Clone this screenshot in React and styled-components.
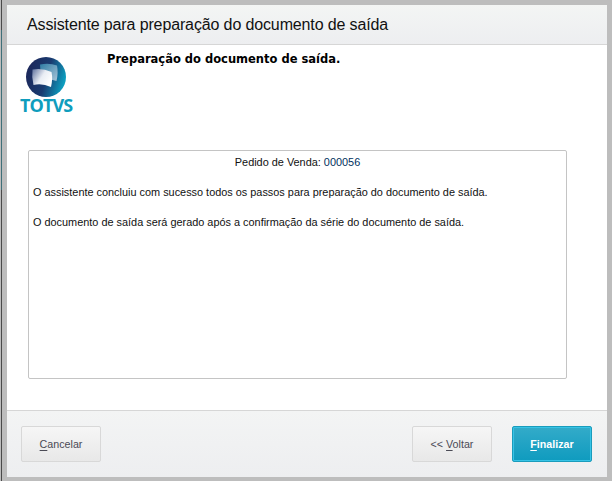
import React from "react";
import styled, { createGlobalStyle } from "styled-components";

const Global = createGlobalStyle`
  html, body { margin: 0; padding: 0; background: #bdbdbd; }
  body { font-family: "Liberation Sans", Arial, sans-serif; }
`;
const Backdrop = styled.div`
  width: 612px; height: 481px; box-sizing: border-box; overflow: hidden;
  padding: 5px 5px 4px 7px;
  background:
    linear-gradient(#4a4a4a 30px, #3f6f78 30px, #3f6f78 190px, #4a4a4a 190px) 1px 0 / 1px 100% no-repeat,
    #bdbdbd;
`;
const Dialog = styled.div`
  height: 100%; display: flex; flex-direction: column; background: #fff;
`;
const Header = styled.header`
  height: 39px; flex: none; box-sizing: content-box;
  background: linear-gradient(#f3f5f4, #edeef0);
  border-bottom: 1px solid #d6d6d6;
  display: flex; align-items: center; padding-left: 20px;
`;
const Title = styled.h1`
  margin: 0; font-weight: 400; font-size: 16px; letter-spacing: -0.13px; color: #111; white-space: nowrap;
`;
const Body = styled.main`
  flex: 1; display: flex; flex-direction: column; padding: 0 40px 31px 21px; min-height: 0;
`;
const Intro = styled.div`
  height: 105px; flex: none; display: flex;
`;
const Brand = styled.div`
  width: 79px; flex: none; display: flex; flex-direction: column; align-items: flex-start;
  padding: 12px 0 0 0;
`;
const Logo = styled.svg`
  width: 40px; height: 40px; margin-left: -2px; display: block;
`;
const BrandName = styled.span`
  font: 700 18px/16px "Open Sans", "Liberation Sans", sans-serif;
  color: #0f9dbd; letter-spacing: -0.9px; margin: 0 0 0 -8px;
`;
const Heading = styled.h2`
  margin: 7px 0 0; font: 700 11.5px/14px "DejaVu Sans", Verdana, sans-serif; color: #000;
`;
const Panel = styled.section`
  flex: 1; box-sizing: border-box; width: 539px;
  border: 1px solid #c4c4c4; border-radius: 2px;
  padding: 5px 4px 4px; font-size: 10.9px; line-height: 13px; color: #111;
  display: flex; flex-direction: column; gap: 17px;
`;
const Centered = styled.div`
  text-align: center;
`;
const Value = styled.span`
  color: #00305e;
`;
const Para = styled.p`
  margin: 0; white-space: nowrap;
`;
const Footer = styled.footer`
  height: 66px; flex: none; display: flex; align-items: center;
  padding: 0 15px 0 14px; gap: 20px;
  background: linear-gradient(#f3f4f4, #edeef0);
  border-top: 1px solid #d6d6d6;
`;
const Button = styled.button`
  width: 80px; height: 36px; box-sizing: border-box; border-radius: 2px; padding: 0;
  font: 400 10.7px "Liberation Sans", Arial, sans-serif;
  border: 1px solid ${p => (p.$primary ? "#1a9cbc" : "#d8d8d8")};
  background: ${p => (p.$primary ? "linear-gradient(#33abc9, #0f9bbf)" : "linear-gradient(#f6f6f6, #e8e8e8)")};
  color: ${p => (p.$primary ? "#fff" : "#4a4a55")};
  font-weight: ${p => (p.$primary ? 700 : 400)};
  box-shadow: ${p => (p.$primary ? "inset 0 0 0 1px #37c3e6" : "none")};
  u { text-underline-offset: 2px; }
`;
const Spacer = styled.div`
  flex: 1;
`;

export default function App() {
  return (
    <>
      <Global />
      <Backdrop>
        <Dialog>
          <Header>
            <Title>Assistente para preparação do documento de saída</Title>
          </Header>
          <Body>
            <Intro>
              <Brand>
                <Logo viewBox="0 0 40 40">
                  <defs>
                    <linearGradient id="rim" x1="0" y1="0.2" x2="1" y2="0.5">
                      <stop offset="0" stopColor="#1c2558" />
                      <stop offset="0.55" stopColor="#1a3b70" />
                      <stop offset="1" stopColor="#0c9fc0" />
                    </linearGradient>
                    <linearGradient id="back" x1="0" y1="0" x2="1" y2="1">
                      <stop offset="0" stopColor="#2f7ca4" />
                      <stop offset="1" stopColor="#a8c4d8" />
                    </linearGradient>
                    <linearGradient id="front" x1="0" y1="0" x2="1" y2="0.6">
                      <stop offset="0" stopColor="#5d6f9c" />
                      <stop offset="0.55" stopColor="#e9edf4" />
                      <stop offset="1" stopColor="#ffffff" />
                    </linearGradient>
                  </defs>
                  <circle cx="20" cy="20" r="20" fill="url(#rim)" />
                  <path d="M14 7.5 Q23 5.5 31 8.5 Q32.5 16 30.5 24 Q24 21.5 15 22 Z" fill="url(#back)" />
                  <path d="M6.5 12.5 Q16 10.5 25.5 15 Q27 22 25 30 Q16 26 7.5 28 Q5.5 20 6.5 12.5 Z" fill="url(#front)" />
                </Logo>
                <BrandName>TOTVS</BrandName>
              </Brand>
              <Heading>Preparação do documento de saída.</Heading>
            </Intro>
            <Panel>
              <Centered>Pedido de Venda: <Value>000056</Value></Centered>
              <Para>O assistente concluiu com sucesso todos os passos para preparação do documento de saída.</Para>
              <Para>O documento de saída será gerado após a confirmação da série do documento de saída.</Para>
            </Panel>
          </Body>
          <Footer>
            <Button><u>C</u>ancelar</Button>
            <Spacer />
            <Button>&lt;&lt; <u>V</u>oltar</Button>
            <Button $primary><u>F</u>inalizar</Button>
          </Footer>
        </Dialog>
      </Backdrop>
    </>
  );
}
